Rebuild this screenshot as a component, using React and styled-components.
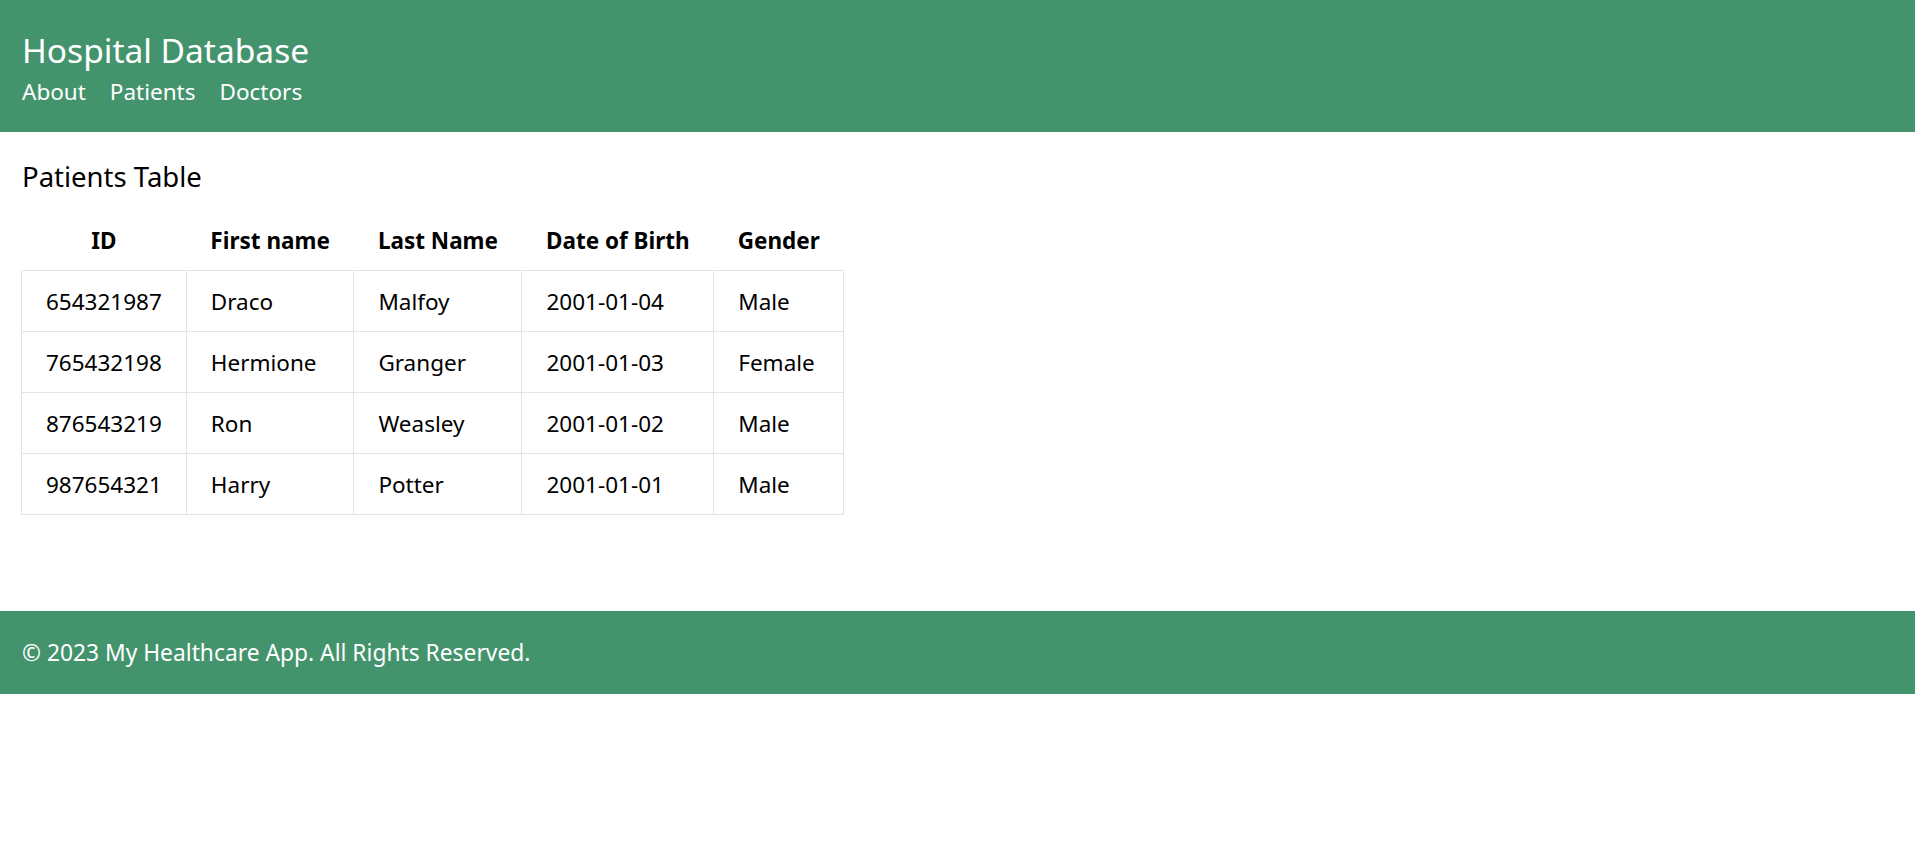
import React from 'react'
import styled, {createGlobalStyle} from 'styled-components'

const patients = [
    {id: '654321987', first: 'Draco', last: 'Malfoy', dob: '2001-01-04', gender: 'Male'},
    {id: '765432198', first: 'Hermione', last: 'Granger', dob: '2001-01-03', gender: 'Female'},
    {id: '876543219', first: 'Ron', last: 'Weasley', dob: '2001-01-02', gender: 'Male'},
    {id: '987654321', first: 'Harry', last: 'Potter', dob: '2001-01-01', gender: 'Male'},
]

const App = () => {
    return (
        <>
            <GlobalStyle />
            <Header>
                <Title>Hospital Database</Title>
                <Nav>
                    <NavLink href="#">About</NavLink>
                    <NavLink href="#">Patients</NavLink>
                    <NavLink href="#">Doctors</NavLink>
                </Nav>
            </Header>
            <Main>
                <Heading>Patients Table</Heading>
                <Table>
                    <thead>
                        <tr>
                            <Th>ID</Th>
                            <Th>First name</Th>
                            <Th>Last Name</Th>
                            <Th>Date of Birth</Th>
                            <Th>Gender</Th>
                        </tr>
                    </thead>
                    <tbody>
                        {patients.map(p => (
                            <tr key={p.id}>
                                <Td>{p.id}</Td>
                                <Td>{p.first}</Td>
                                <Td>{p.last}</Td>
                                <Td>{p.dob}</Td>
                                <Td>{p.gender}</Td>
                            </tr>
                        ))}
                    </tbody>
                </Table>
            </Main>
            <Footer>© 2023 My Healthcare App. All Rights Reserved.</Footer>
        </>
    )
}

const GlobalStyle = createGlobalStyle`
    body {
        margin: 0;
        background: #fff;
        font-family: "Noto Sans", "Open Sans", sans-serif;
        color: #000;
    }
`
const Header = styled.header`
    background: #43946d;
    color: #fff;
    height: 132px;
    box-sizing: border-box;
    padding: 28px 22px 0;
`
const Title = styled.h1`
    margin: 0;
    font-size: 33.5px;
    font-weight: 400;
    line-height: 44px;
`
const Nav = styled.nav`
    display: flex;
    gap: 24px;
    margin-top: 5px;
`
const NavLink = styled.a`
    color: #fff;
    text-decoration: none;
    font-size: 22.5px;
    line-height: 30px;
`
const Main = styled.main`
    padding: 27px 22px 96px 21px;
`
const Heading = styled.h2`
    margin: 0 0 16px 1px;
    font-size: 27.5px;
    font-weight: 400;
    line-height: 36px;
`
const Table = styled.table`
    border-collapse: collapse;
`
const Th = styled.th`
    font-size: 22.5px;
    font-weight: 700;
    height: 59px;
    padding: 0 24px;
    text-align: center;
`
const Td = styled.td`
    font-size: 22.5px;
    height: 60px;
    padding: 0 24px;
    border: 1px solid #e4e4e8;
`
const Footer = styled.footer`
    background: #43946d;
    color: #fff;
    height: 83px;
    box-sizing: border-box;
    padding: 0 22px;
    display: flex;
    align-items: center;
    font-size: 22.8px;
`

export default App
